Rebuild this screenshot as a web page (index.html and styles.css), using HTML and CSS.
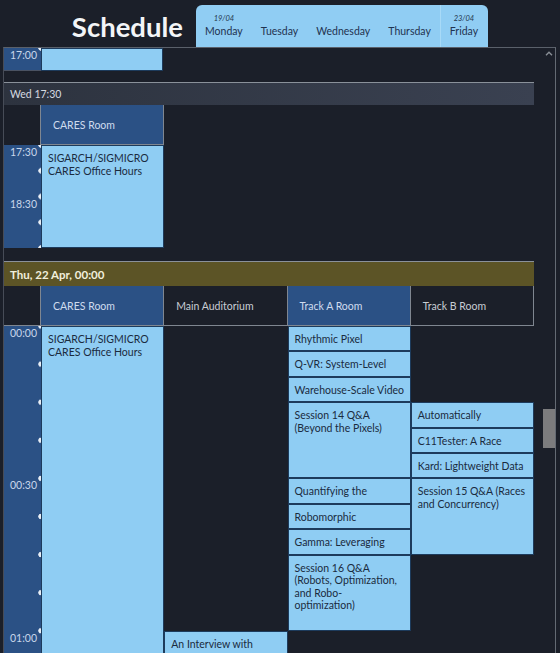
FILE: index.html
```html
<!DOCTYPE html>
<html lang="en">
<head>
<meta charset="utf-8">
<title>Schedule</title>
<link rel="stylesheet" href="styles.css">
</head>
<body>
<header class="top">
  <h1 class="title">Schedule</h1>
  <nav class="tabs">
    <div class="tab"><span class="date">19/04</span><span class="day">Monday</span></div>
    <div class="tab"><span class="day">Tuesday</span></div>
    <div class="tab"><span class="day">Wednesday</span></div>
    <div class="tab"><span class="day">Thursday</span></div>
    <div class="tab tab-last"><span class="date">23/04</span><span class="day">Friday</span></div>
  </nav>
</header>
<main class="viewport">
  <div class="content">
    <section class="grid grid-one tail">
      <div class="times times-wed tail-times"><span class="time">17:00</span></div>
      <div class="event tail-event"></div>
    </section>

    <div class="day-head day-wed">Wed 17:30</div>
    <section class="grid grid-one rooms">
      <div class="corner"></div>
      <div class="room room-blue">CARES Room</div>
    </section>
    <section class="grid grid-one slots-wed">
      <div class="times times-wed">
        <span class="time time-wed">17:30</span>
        <span class="time time-wed">18:30</span>
      </div>
      <div class="event">SIGARCH/SIGMICRO CARES Office Hours</div>
    </section>

    <div class="day-head day-thu">Thu, 22 Apr, 00:00</div>
    <section class="grid grid-four rooms">
      <div class="corner"></div>
      <div class="room room-blue">CARES Room</div>
      <div class="room">Main Auditorium</div>
      <div class="room room-blue">Track A Room</div>
      <div class="room">Track B Room</div>
    </section>
    <section class="grid grid-four slots-thu">
      <div class="times times-thu">
        <span class="time time-thu">00:00</span>
        <span class="time time-thu">00:30</span>
        <span class="time time-thu">01:00</span>
      </div>
      <div class="event col-cares row-all">SIGARCH/SIGMICRO CARES Office Hours</div>
      <div class="event col-main row-13">An Interview with</div>

      <div class="event short col-a row-1">Rhythmic Pixel</div>
      <div class="event short col-a row-2">Q-VR: System-Level</div>
      <div class="event short col-a row-3">Warehouse-Scale Video</div>
      <div class="event col-a row-4 span-3">Session 14 Q&amp;A (Beyond the Pixels)</div>
      <div class="event short col-a row-7">Quantifying the</div>
      <div class="event short col-a row-8">Robomorphic</div>
      <div class="event short col-a row-9">Gamma: Leveraging</div>
      <div class="event col-a row-10 span-3">Session 16 Q&amp;A (Robots, Optimization, and Robo-<br>optimization)</div>

      <div class="event short col-b row-4">Automatically</div>
      <div class="event short col-b row-5">C11Tester: A Race</div>
      <div class="event short col-b row-6">Kard: Lightweight Data</div>
      <div class="event col-b row-7 span-3">Session 15 Q&amp;A (Races and Concurrency)</div>
    </section>
  </div>
  <div class="scrollbar">
    <svg class="arrow" width="8" height="5" viewBox="0 0 8 5"><path d="M1 4.2 L4 1.2 L7 4.2" fill="none" stroke="#8a8f96" stroke-width="1.4"/></svg>
    <div class="thumb"></div>
  </div>
</main>
</body>
</html>
```
FILE: styles.css
```css
html, body {
  margin: 0;
  padding: 0;
}
body {
  width: 560px;
  height: 653px;
  overflow: hidden;
  background: #1b1f29;
  font-family: Lato, "Noto Sans", "DejaVu Sans", sans-serif;
}

/* ---------- header ---------- */
.top {
  display: flex;
  align-items: flex-end;
  height: 47px;
}
.title {
  flex: none;
  width: 183px;
  margin: 0 13px 0 0;
  padding-bottom: 6px;
  text-align: right;
  font-size: 27.5px;
  line-height: 28px;
  font-weight: 700;
  color: #f3f5f7;
}
.tabs {
  display: flex;
  height: 42px;
  background: #90cdf3;
  border-radius: 6px 6px 0 0;
}
.tab {
  display: flex;
  flex-direction: column;
  justify-content: flex-end;
  align-items: center;
  padding: 0 9px 9px;
}
.tab-last {
  border-left: 1px solid #a8daf7;
  padding-right: 10px;
}
.date {
  font-size: 7.5px;
  line-height: 9px;
  font-style: italic;
  color: #24364d;
  margin-bottom: 2px;
}
.day {
  font-size: 10.5px;
  line-height: 13px;
  color: #1f3350;
}

/* ---------- viewport ---------- */
.viewport {
  display: flex;
  margin-left: 3px;
  width: 553px;
  height: 606px;
  box-sizing: border-box;
  border-top: 1px solid #5a606a;
  border-left: 1px solid #474c57;
  border-right: 1px solid #646a73;
  overflow: hidden;
}
.content {
  flex: none;
  width: 530px;
  margin-right: 9px;
}
.scrollbar {
  flex: none;
  width: 12px;
  display: flex;
  flex-direction: column;
  align-items: center;
}
.arrow {
  margin-top: 3px;
}
.thumb {
  margin-top: 353px;
  width: 12px;
  height: 39px;
  background: #7c7c7e;
}

/* ---------- grids ---------- */
.grid {
  display: grid;
}
.grid-one {
  grid-template-columns: 37px 123px;
}
.grid-four {
  grid-template-columns: 37px repeat(4, 1fr);
}
.tail {
  height: 23px;
}
.tail-times {
  border-bottom: 1px solid #4a5262;
}
.tail-event {
  margin-right: 1px;
  border: none;
}

.day-head {
  box-sizing: border-box;
  border-top: 1px solid #8a919a;
  padding-left: 6px;
  display: flex;
  align-items: center;
}
.day-wed {
  margin-top: 11px;
  height: 23px;
  background: linear-gradient(to right, #2d333f, #3a4151);
  color: #d6dae1;
  font-size: 10.5px;
}
.day-thu {
  margin-top: 13px;
  height: 25px;
  background: #5c5426;
  color: #f1efdc;
  font-size: 11.5px;
  font-weight: 700;
}

.rooms {
  height: 40px;
}
.corner,
.room {
  box-sizing: border-box;
  border-right: 1px solid #7f8690;
  border-bottom: 1px solid #7f8690;
}
.room {
  display: flex;
  align-items: center;
  padding-left: 12px;
  font-size: 10.5px;
  color: #c8cdd4;
}
.room-blue {
  background: #2b5185;
  color: #cfdcef;
}
.grid-one .corner {
  border-bottom: none;
}

/* ---------- time column ---------- */
.times {
  display: flex;
  flex-direction: column;
  background-color: #2b5185;
  background-image: radial-gradient(circle at 100% 50%, #e9eef5 0 2.4px, transparent 3px);
  background-repeat: repeat-y;
}
.times-wed {
  background-size: 100% 25.75px;
  background-position: 0 -12.875px;
}
.times-thu {
  grid-column: 1;
  grid-row: 1 / 15;
  background-size: 100% 38.1px;
  background-position: 0 -19.05px;
}
.time {
  flex: none;
  padding: 1px 0 0 6px;
  font-size: 10.5px;
  line-height: 12px;
  color: #c8d6ea;
}
.time-wed {
  height: 51.5px;
  box-sizing: border-box;
}
.time-thu {
  height: 152.4px;
  box-sizing: border-box;
}

/* ---------- events ---------- */
.event {
  box-sizing: border-box;
  background: #8fcdf3;
  border: 1px solid #1d3b5c;
  color: #1a2b3e;
  font-size: 10.5px;
  line-height: 12.5px;
  padding: 6px 6px 4px;
  overflow: hidden;
}
.short {
  white-space: nowrap;
}
.slots-wed {
  height: 103px;
}
.slots-wed .event {
  padding: 6px 6px;
}
.slots-thu {
  grid-template-rows: repeat(14, 25.4px);
}
.col-cares { grid-column: 2; }
.col-main { grid-column: 3; }
.col-a { grid-column: 4; }
.col-b { grid-column: 5; }
.row-all { grid-row: 1 / 15; padding: 6px 6px; }
.row-1 { grid-row: 1; }
.row-2 { grid-row: 2; }
.row-3 { grid-row: 3; }
.row-4 { grid-row: 4; }
.row-5 { grid-row: 5; }
.row-6 { grid-row: 6; }
.row-7 { grid-row: 7; }
.row-8 { grid-row: 8; }
.row-9 { grid-row: 9; }
.row-10 { grid-row: 10; }
.row-13 { grid-row: 13 / 15; }
.span-3 { grid-row-end: span 3; }
```
